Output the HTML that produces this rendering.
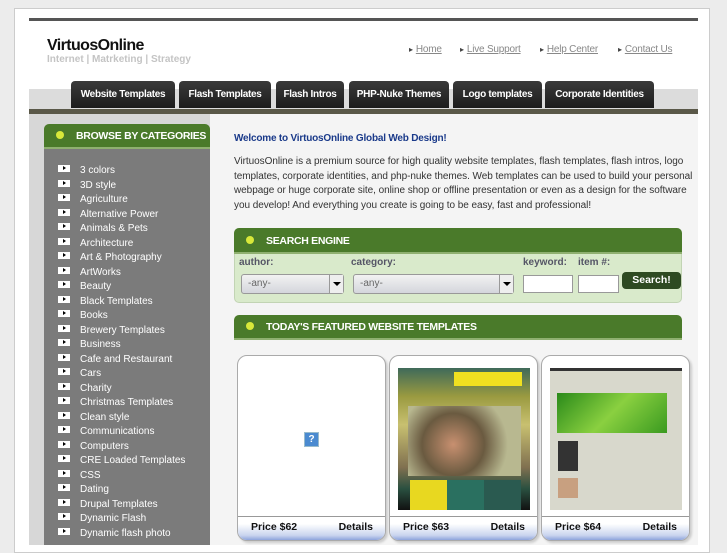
<!DOCTYPE html>
<html><head><style>
*{margin:0;padding:0;box-sizing:border-box}
body{width:727px;height:545px;overflow:hidden;background:#ececec;font-family:"Liberation Sans",sans-serif;position:relative}
.abs{position:absolute;white-space:nowrap}
.tab{position:absolute;top:81px;height:27px;background:linear-gradient(#3a3a3a,#1c1c1c);border-radius:4px 4px 0 0;color:#fff;font-size:10px;font-weight:bold;text-align:center;line-height:27px;letter-spacing:-0.3px;white-space:nowrap}
.cat{position:absolute;left:58px;font-size:10px;color:#fff;height:14px;line-height:14px;white-space:nowrap}
.cat i{display:inline-block;width:12px;height:7px;background:#fff;margin-right:10px;vertical-align:1px;position:relative}
.cat i:after{content:"";position:absolute;left:5px;top:1px;border-left:3px solid #000;border-top:2.5px solid transparent;border-bottom:2.5px solid transparent}
.gh{position:absolute;background:#4a7a2a;color:#fff;font-weight:bold;font-size:10.5px;border-radius:5px 5px 0 0;border-bottom:2px solid #8fb070;white-space:nowrap;letter-spacing:-0.3px}
.dot{display:inline-block;width:8px;height:8px;border-radius:50%;background:#d8e83a;margin:0 12px 0 12px;vertical-align:0}
.lnk{position:absolute;top:44px;font-size:10px;color:#888;text-decoration:underline;white-space:nowrap;letter-spacing:-0.2px}
.lnk:before{content:"▸ ";font-size:8px;color:#444;display:inline-block;margin-right:3px}
.card{position:absolute;top:355px;width:149px;height:186px;background:#fff;border:1px solid #aaa;border-radius:10px;overflow:hidden;box-shadow:2px 2px 2px #ccc}
.cb{position:absolute;left:0;right:0;bottom:0;height:24px;border-top:1px solid #999;background:linear-gradient(#fff 30%,#c9d4ee 80%,#8ea4dc);font-size:10.5px;font-weight:bold;text-decoration:underline;color:#111}
.lab{position:absolute;font-size:10px;font-weight:bold;color:#556}
.sel{position:absolute;top:274px;height:20px;border:1px solid #999;border-radius:3px;background:linear-gradient(#f2f2f2,#d4d6dc);font-size:10px;color:#666;line-height:18px;padding-left:6px}
.sel b{position:absolute;right:0;top:0;width:14px;height:18px;border-left:1px solid #999;background:#eee}
.sel b:after{content:"";position:absolute;left:3px;top:7px;border-top:4px solid #000;border-left:4px solid transparent;border-right:4px solid transparent}
.inp{position:absolute;top:275px;height:18px;background:#fff;border:1px solid #999}
</style></head><body>
<div class="abs" style="left:14px;top:8px;width:696px;height:545px;background:#fff;border:1px solid #ccc"></div>
<div class="abs" style="left:29px;top:18px;width:669px;height:3px;background:#555"></div>
<div class="abs" style="left:47px;top:37px;font-size:16px;font-weight:bold;color:#111;letter-spacing:-0.6px">VirtuosOnline</div>
<div class="abs" style="left:47px;top:54px;font-size:10px;font-weight:bold;color:#c4c4c4;letter-spacing:0">Internet | Matrketing | Strategy</div>
<span class="lnk" style="left:409px">Home</span>
<span class="lnk" style="left:460px">Live Support</span>
<span class="lnk" style="left:540px">Help Center</span>
<span class="lnk" style="left:618px">Contact Us</span>
<div class="abs" style="left:29px;top:89px;width:669px;height:21px;background:#dcdcdc"></div>
<div class="tab" style="left:71px;width:104px">Website Templates</div>
<div class="tab" style="left:179px;width:92px">Flash Templates</div>
<div class="tab" style="left:276px;width:68px">Flash Intros</div>
<div class="tab" style="left:349px;width:100px">PHP-Nuke Themes</div>
<div class="tab" style="left:453px;width:89px">Logo templates</div>
<div class="tab" style="left:545px;width:109px">Corporate Identities</div>
<div class="abs" style="left:29px;top:109px;width:669px;height:5px;background:#5a5848"></div>
<div class="abs" style="left:29px;top:114px;width:181px;height:431px;background:#d7d7d7"></div>
<div class="abs" style="left:210px;top:114px;width:488px;height:431px;background:#f4f4f4"></div>
<div class="abs" style="left:44px;top:148px;width:166px;height:397px;background:#7b7b7b"></div>
<div class="gh" style="left:44px;top:124px;width:166px;height:25px;line-height:24px"><span class="dot" style="margin-left:12px"></span>BROWSE BY CATEGORIES</div>
<div class="cat" style="top:164px"><i></i>3 colors</div>
<div class="cat" style="top:178.5px"><i></i>3D style</div>
<div class="cat" style="top:193px"><i></i>Agriculture</div>
<div class="cat" style="top:207.5px"><i></i>Alternative Power</div>
<div class="cat" style="top:222px"><i></i>Animals &amp; Pets</div>
<div class="cat" style="top:236.5px"><i></i>Architecture</div>
<div class="cat" style="top:251px"><i></i>Art &amp; Photography</div>
<div class="cat" style="top:265.5px"><i></i>ArtWorks</div>
<div class="cat" style="top:280px"><i></i>Beauty</div>
<div class="cat" style="top:294.5px"><i></i>Black Templates</div>
<div class="cat" style="top:309px"><i></i>Books</div>
<div class="cat" style="top:323.5px"><i></i>Brewery Templates</div>
<div class="cat" style="top:338px"><i></i>Business</div>
<div class="cat" style="top:352.5px"><i></i>Cafe and Restaurant</div>
<div class="cat" style="top:367px"><i></i>Cars</div>
<div class="cat" style="top:381.5px"><i></i>Charity</div>
<div class="cat" style="top:396px"><i></i>Christmas Templates</div>
<div class="cat" style="top:410.5px"><i></i>Clean style</div>
<div class="cat" style="top:425px"><i></i>Communications</div>
<div class="cat" style="top:439.5px"><i></i>Computers</div>
<div class="cat" style="top:454px"><i></i>CRE Loaded Templates</div>
<div class="cat" style="top:468.5px"><i></i>CSS</div>
<div class="cat" style="top:483px"><i></i>Dating</div>
<div class="cat" style="top:497.5px"><i></i>Drupal Templates</div>
<div class="cat" style="top:512px"><i></i>Dynamic Flash</div>
<div class="cat" style="top:526.5px"><i></i>Dynamic flash photo</div>
<div class="abs" style="left:234px;top:133px;font-size:10px;font-weight:bold;color:#1a3a8a;letter-spacing:-0.2px">Welcome to VirtuosOnline Global Web Design!</div>
<div style="position:absolute;left:234px;top:155px;width:459px;font-size:10px;line-height:14.7px;color:#333;letter-spacing:-0.05px">VirtuosOnline is a premium source for high quality website templates, flash templates, flash intros, logo templates, corporate identities, and php-nuke themes. Web templates can be used to build your personal webpage or huge corporate site, online shop or offline presentation or even as a design for the software you develop! And everything you create is going to be easy, fast and professional!</div>
<div class="abs" style="left:234px;top:228px;width:448px;height:75px;background:#d9eacb;border:1px solid #c2d4b4;border-radius:5px"></div>
<div class="gh" style="left:234px;top:228px;width:448px;height:26px;line-height:26px"><span class="dot"></span>SEARCH ENGINE</div>
<div class="lab" style="left:239px;top:257px">author:</div>
<div class="lab" style="left:351px;top:257px">category:</div>
<div class="lab" style="left:523px;top:257px">keyword:</div>
<div class="lab" style="left:578px;top:257px">item #:</div>
<div class="sel" style="left:241px;width:103px">-any-<b></b></div>
<div class="sel" style="left:353px;width:161px">-any-<b></b></div>
<div class="inp" style="left:523px;width:50px"></div>
<div class="inp" style="left:578px;width:41px"></div>
<div class="abs" style="left:622px;top:272px;width:59px;height:17px;background:#2e4a22;border-radius:4px;color:#fff;font-size:10.5px;font-weight:bold;text-align:center;line-height:17px">Search!</div>
<div class="gh" style="left:234px;top:315px;width:448px;height:25px;line-height:25px"><span class="dot"></span>TODAY'S FEATURED WEBSITE TEMPLATES</div>
<div class="card" style="left:237px">
<div class="abs" style="left:66px;top:76px;width:15px;height:15px;background:#4a8ad0;border:1px solid #9bc;color:#fff;font-size:10px;font-weight:bold;text-align:center;line-height:13px">?</div>
<div class="cb"><span class="abs" style="left:13px;top:4px">Price $62</span><span class="abs" style="right:12px;top:4px">Details</span></div></div>
<div class="card" style="left:389px">
<div class="abs" style="left:8px;top:12px;width:132px;height:142px;background:linear-gradient(#3f6a5a,#9a9a40 20%,#c8c070 40%,#807050 70%,#2a5040 85%,#111)"></div>
<div class="abs" style="left:18px;top:50px;width:113px;height:70px;background:radial-gradient(circle at 40% 55%,#c89070 0,#6a5a40 40%,#b8b890 70%)"></div>
<div class="abs" style="left:20px;top:124px;width:37px;height:30px;background:#e8d820"></div>
<div class="abs" style="left:57px;top:124px;width:37px;height:30px;background:#2a7060"></div>
<div class="abs" style="left:94px;top:124px;width:37px;height:30px;background:#2a5a50"></div>
<div class="abs" style="left:64px;top:16px;width:68px;height:14px;background:#f0e020"></div>
<div class="cb"><span class="abs" style="left:13px;top:4px">Price $63</span><span class="abs" style="right:12px;top:4px">Details</span></div></div>
<div class="card" style="left:541px">
<div class="abs" style="left:8px;top:12px;width:132px;height:142px;background:#d8d8cc"></div>
<div class="abs" style="left:8px;top:12px;width:132px;height:3px;background:#333"></div>
<div class="abs" style="left:15px;top:37px;width:110px;height:40px;background:linear-gradient(135deg,#2a8a1a,#8ad040,#3a9a20)"></div>
<div class="abs" style="left:16px;top:85px;width:20px;height:30px;background:#333"></div>
<div class="abs" style="left:16px;top:122px;width:20px;height:20px;background:#c8a080"></div>
<div class="cb"><span class="abs" style="left:13px;top:4px">Price $64</span><span class="abs" style="right:12px;top:4px">Details</span></div></div>
</body></html>
